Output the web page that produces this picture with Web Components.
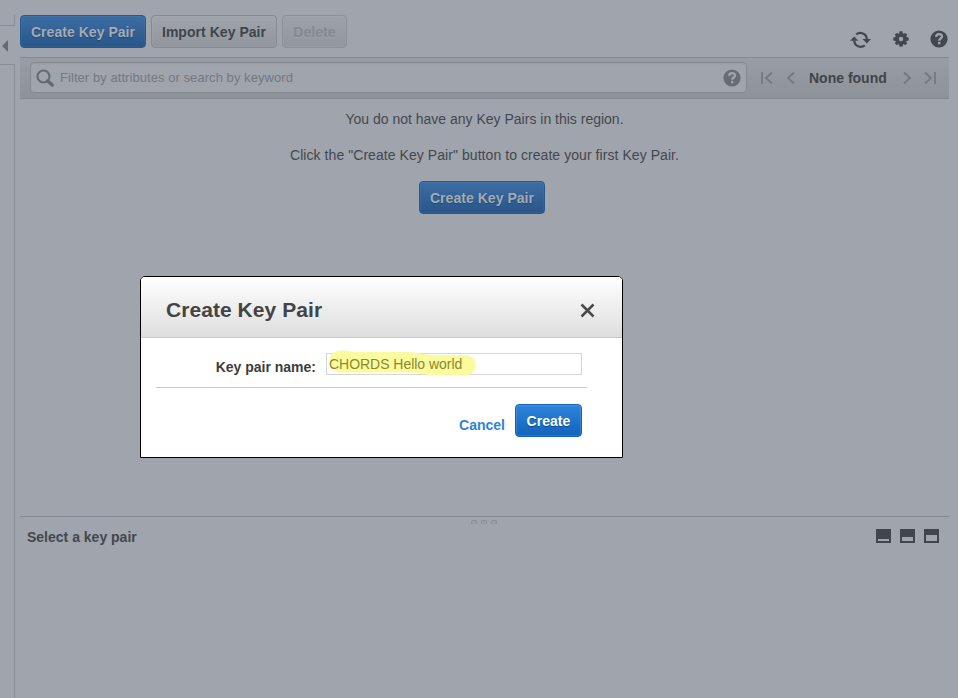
<!DOCTYPE html>
<html lang="en">
<head>
<meta charset="utf-8">
<title>Key Pairs</title>
<style>
html, body { margin: 0; height: 100%; overflow: hidden; }
body { background: #a0a4ac; color: #43484f; font: 14px/18px "Liberation Sans", Arial, sans-serif; }
</style>
</head>
<body>
<key-pairs-page></key-pairs-page>
<script>
const define = (name, html) => customElements.define(name, class extends HTMLElement {
  constructor() {
    super();
    const t = document.createElement('template');
    t.innerHTML = html;
    this.attachShadow({ mode: 'open' }).append(t.content.cloneNode(true));
  }
});

define('kp-button', `
<style>
:host { display: inline-flex; box-sizing: border-box; height: 33px; width: 126px; align-items: center; justify-content: center;
  border: 1px solid #858a91; border-radius: 4px; background: linear-gradient(#a0a4ab, #91969d); color: #40454c;
  font-weight: bold; line-height: 31px; letter-spacing: .04px; white-space: nowrap; box-shadow: inset 0 0 0 1px rgba(255,255,255,.04); padding-top: 1px; }
:host([kind=primary]) { background: linear-gradient(#3c6da4, #285689); border-color: #29588f; color: #a6abb3; text-shadow: 0 1px 1px #234872; }
:host([kind=disabled]) { width: 65px; border-color: #8c9097; background: linear-gradient(#9da1a8, #92979e); color: #858a91; text-shadow: 0 1px 0 #9da1a8; }
:host([kind=live]) { width: 67px; background: linear-gradient(#2e84da, #1264bd); border-color: #1462b8; color: #fff;
  text-shadow: 0 1px 1px #0d4685; box-shadow: inset 0 0 0 1px rgba(255,255,255,.12); }
</style><slot></slot>`);

define('side-rail', `
<style>
:host { display: flex; flex-direction: column; box-sizing: border-box; width: 15px; height: 698px; padding-top: 15px; }
i { display: block; box-sizing: border-box; border: 0 solid #898d95; }
.a { height: 11px; border-width: 0 1px 1px 0; }
.b { height: 38px; padding: 14px 0 0 2px; }
.c { flex: 1; border-width: 1px 1px 0 0; }
svg { display: block; }
</style>
<i class="a"></i><i class="b"><svg width="6" height="12"><path d="M6 0V12L0 6Z" fill="#666b73"/></svg></i><i class="c"></i>`);

define('help-icon', `
<style>:host { display: block; width: 18px; height: 18px; color: #43484f; } svg { display: block; }</style>
<svg width="18" height="18" viewBox="0 0 18 18"><circle cx="9" cy="9" r="8.6" fill="currentColor"/>
<path d="M6.1 6.9C6.2 5 7.3 4.2 9.1 4.2C10.8 4.2 12 5.1 12 6.6C12 8.5 9.2 8.6 9.2 10.7" fill="none" stroke="#a0a4ac" stroke-width="2.3"/>
<rect x="8" y="11.9" width="2.4" height="2.4" fill="#a0a4ac"/></svg>`);

define('tool-icons', `
<style>:host { display: flex; align-items: center; gap: 20px; } svg { display: block; } .sync { margin: 2px 1px 0 0; }</style>
<svg class="sync" width="21" height="18" viewBox="0 0 21 18" fill="none" stroke="#43484f" stroke-width="2.2">
<path d="M6.2 3.4C10 .4 16.6 2.3 16.8 8.4M14.8 14.4C11 17.4 4.4 15.5 4.2 9.4"/>
<path d="M12.6 8H21L16.8 12.4ZM0 9.8H8.4L4.2 5.4Z" fill="#43484f" stroke="none"/></svg>
<svg width="18" height="18" viewBox="0 0 18 18"><g fill="#43484f"><circle cx="9" cy="9" r="6"/>
<rect x="7.3" y="1.3" width="3.4" height="15.4" rx=".8"/><rect x="1.3" y="7.3" width="15.4" height="3.4" rx=".8"/>
<rect x="7.4" y="1.6" width="3.2" height="14.8" rx=".8" transform="rotate(45 9 9)"/><rect x="7.4" y="1.6" width="3.2" height="14.8" rx=".8" transform="rotate(-45 9 9)"/></g>
<circle cx="9" cy="9" r="2.2" fill="#a0a4ac"/></svg>
<help-icon></help-icon>`);

define('search-box', `
<style>
:host { display: flex; flex: none; align-items: center; box-sizing: border-box; width: 717px; height: 31px; padding: 0 5px;
  border: 1px solid #858a91; border-radius: 4px; background: #a0a4ac; color: #747980; font-size: 13px; box-shadow: inset 0 1px 1px #989ca3; }
svg { display: block; margin-right: 6px; }
span { flex: 1; letter-spacing: .06px; }
help-icon { color: #686d75; }
</style>
<svg width="18" height="18" viewBox="0 0 18 18" fill="none" stroke="#656a72"><circle cx="7.5" cy="7.5" r="6" stroke-width="2.1"/><path d="M11.8 12L16.2 16" stroke-width="3.4" stroke-linecap="round"/></svg>
<span>Filter by attributes or search by keyword</span><help-icon></help-icon>`);

define('pager-nav', `
<style>
:host { display: flex; flex: none; align-items: center; font-weight: bold; color: #40454c; white-space: nowrap; }
svg { display: block; fill: none; stroke: #747981; stroke-width: 1.8; }
span { margin: 0 16px 0 14px; }
</style>
<svg width="34" height="14"><path d="M1 1V13M11 1.5L5 7L11 12.5M33 1.5L27 7L33 12.5"/></svg>
<span>None found</span>
<svg width="34" height="14"><path d="M1 1.5L7 7L1 12.5M22 1.5L28 7L22 12.5M32 1V13"/></svg>`);

define('filter-bar', `
<style>
:host { display: flex; align-items: center; box-sizing: border-box; height: 42px; padding: 0 0 0 10px; gap: 14px;
  border: solid #858a91; border-width: 1px 0; background: linear-gradient(#989ca4, #8e9299); }
search-box { margin-bottom: 1px; }
</style><search-box></search-box><pager-nav></pager-nav>`);

define('empty-state', `
<style>
:host { display: flex; flex-direction: column; align-items: center; height: 417px; padding-top: 11px; box-sizing: border-box; }
p { margin: 0 0 18px; }
.hint { letter-spacing: .062px; }
kp-button { margin: -1px 5px 0 0; }
</style>
<p>You do not have any Key Pairs in this region.</p>
<p class="hint">Click the "Create Key Pair" button to create your first Key Pair.</p>
<kp-button kind="primary">Create Key Pair</kp-button>`);

define('detail-pane', `
<style>
:host { display: block; border-top: 1px solid #858a91; }
.grip { display: flex; justify-content: center; gap: 4px; height: 7px; padding-top: 3px; box-sizing: border-box; margin-right: 2px; }
.grip i { width: 6px; height: 4px; box-sizing: border-box; border: solid #8b9097; border-width: 1px 1px 0; border-radius: 2px 2px 0 0; background: #9a9ea6; }
.row { display: flex; justify-content: space-between; align-items: center; height: 25px; padding: 0 10px 0 7px; font-weight: bold; }
svg { display: block; margin-top: -2px; }
</style>
<div class="grip"><i></i><i></i><i></i></div>
<div class="row"><span>Select a key pair</span>
<svg width="63" height="14"><path fill="#40454e" d="M0 0h15v14H0zM24 0h15v14H24zM48 0h15v14H48z"/><path fill="#a0a4ac" d="M2 10h11v2H2zM26 8h11v4H26zM50 6h11v6H50z"/></svg></div>`);

define('create-dialog', `
<style>
:host { display: block; box-sizing: border-box; width: 483px; height: 182px; border: 1px solid #000; border-radius: 5px 5px 0 0; background: #fff; color: #3c3c3c; overflow: hidden; }
header { display: flex; align-items: center; justify-content: space-between; box-sizing: border-box; height: 61px; padding: 6px 27px 0 25px;
  border-bottom: 1px solid #c8c8c8; background: linear-gradient(#fff, #dedede); }
h1 { margin: 0; font-size: 21px; line-height: 24px; letter-spacing: .06px; color: #444; }
.field { display: flex; margin: 0 35px 0 15px; height: 49px; border-bottom: 1px solid #c8c8c8; }
label { width: 160px; text-align: right; font-weight: bold; padding-top: 20px; }
.input { display: block; position: relative; box-sizing: border-box; width: 256px; height: 22px; margin: 15px 0 0 10px; border: 1px solid #d5d5d5; padding-left: 2px; line-height: 21px; color: #8c8a2d; }
.input svg { position: absolute; left: 0; top: -4px; }
.input span { position: relative; letter-spacing: -.03px; }
footer { display: flex; justify-content: flex-end; padding: 16px 40px 0 0; gap: 10px; }
a { color: #2e83dc; font-weight: bold; line-height: 18px; padding-top: 12px; }
</style>
<header><h1>Create Key Pair</h1><svg width="15" height="15"><path d="M1.5 1.5L13.5 13.5M13.5 1.5L1.5 13.5" stroke="#4a4a4a" stroke-width="2.5"/></svg></header>
<div class="field"><label>Key pair name:</label><div class="input">
<svg width="154" height="27"><path d="M12 0.6C19 -.2 23 2 30 2H79C91 2 96 5 106 5H138C152 5 152 25 139 25.5H107C99 25.5 93 22.5 84 22.5H14C-1 21 -.5 2 12 .6Z" fill="#fafa9e"/></svg><span>CHORDS Hello world</span></div></div>
<footer><a>Cancel</a><kp-button kind="live">Create</kp-button></footer>`);

define('key-pairs-page', `
<style>
:host { display: grid; grid-template-columns: 15px 929px; column-gap: 5px; height: 698px; position: relative; }
.bar { display: flex; height: 57px; padding-top: 15px; box-sizing: border-box; gap: 5px; }
tool-icons { margin: 6px 0 0 auto; padding-right: 1px; }
create-dialog { position: absolute; left: 140px; top: 276px; }
</style>
<side-rail></side-rail>
<main>
<div class="bar"><kp-button kind="primary">Create Key Pair</kp-button><kp-button>Import Key Pair</kp-button><kp-button kind="disabled">Delete</kp-button><tool-icons></tool-icons></div>
<filter-bar></filter-bar><empty-state></empty-state><detail-pane></detail-pane>
</main>
<create-dialog></create-dialog>`);
</script>
</body>
</html>
